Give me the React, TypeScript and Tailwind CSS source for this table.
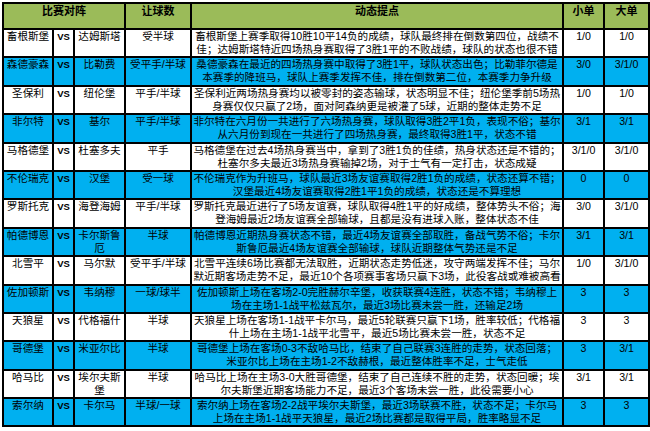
type Row = {
  home: string;
  away: string;
  hcp: string;
  desc: [string, string];
  small: string;
  big: string;
};

const rows: Row[] = [
  {
    home: "畜根斯堡",
    away: "达姆斯塔",
    hcp: "受半球",
    desc: [
      "畜根斯堡上赛季取得10胜10平14负的成绩，球队最终排在倒数第四位，战绩不",
      "佳；达姆斯塔特近四场热身赛取得了3胜1平的不败战绩，球队的状态也很不错",
    ],
    small: "1/0",
    big: "1/0",
  },
  {
    home: "森德豪森",
    away: "比勒费",
    hcp: "受平手/半球",
    desc: [
      "桑德豪森在最近的四场热身赛中取得了3胜1平，球队状态出色；比勒菲尔德是",
      "本赛季的降班马，球队上赛季发挥不佳，排在倒数第二位，本赛季力争升级",
    ],
    small: "3/0",
    big: "3/1/0",
  },
  {
    home: "圣保利",
    away: "纽伦堡",
    hcp: "平手/半球",
    desc: [
      "圣保利近两场热身赛均以被零封的姿态输球，状态明显不佳；纽伦堡季前5场热",
      "身赛仅仅只赢了2场，面对阿森纳更是被灌了5球，近期的整体走势不足",
    ],
    small: "1/0",
    big: "1/0",
  },
  {
    home: "非尔特",
    away: "基尔",
    hcp: "平手/半球",
    desc: [
      "非尔特在六月份一共进行了六场热身赛，球队取得3胜2平1负，表现不俗；基尔",
      "从六月份到现在一共进行了四场热身赛，最终取得3胜1平，状态不错",
    ],
    small: "3/1",
    big: "3/1",
  },
  {
    home: "马格德堡",
    away: "杜塞多夫",
    hcp: "平手",
    desc: [
      "马格德堡在过去4场热身赛当中，拿到了3胜1负的佳绩，热身状态还是不错的；",
      "杜塞尔多夫最近3场热身赛输掉2场，对于士气有一定打击，状态成疑",
    ],
    small: "3/1/0",
    big: "3/1/0",
  },
  {
    home: "不伦瑞克",
    away: "汉堡",
    hcp: "受一球",
    desc: [
      "不伦瑞克作为升班马，球队最近3场友谊赛取得2胜1负的成绩，状态还算不错；",
      "汉堡最近4场友谊赛取得2胜1平1负的成绩，状态还是不算理想",
    ],
    small: "0",
    big: "0",
  },
  {
    home: "罗斯托克",
    away: "海登海姆",
    hcp: "平手/半球",
    desc: [
      "罗斯托克最近进行了5场友谊赛，球队取得4胜1平的好成绩，整体势头不俗；海",
      "登海姆最近2场友谊赛全部输球，且都是没有进球入账，整体状态不佳",
    ],
    small: "3/0",
    big: "3/1/0",
  },
  {
    home: "帕德博恩",
    away: "卡尔斯鲁厄",
    hcp: "半球",
    desc: [
      "帕德博恩近期热身赛状态不错，最近4场友谊赛全部取胜，备战气势不俗；卡尔",
      "斯鲁厄最近4场友谊赛全部输球，球队近期整体气势还是不足",
    ],
    small: "3/1",
    big: "3/1",
  },
  {
    home: "北雪平",
    away: "马尔默",
    hcp: "受平手/半球",
    desc: [
      "北雪平连续6场比赛都无法取胜，近期状态走势低迷，攻守两端发挥不佳；马尔",
      "默近期客场走势不足，最近10个各项赛事客场只赢下3场，此役客战或难被高看",
    ],
    small: "1/0",
    big: "3/1/0",
  },
  {
    home: "佐加顿斯",
    away: "韦纳穆",
    hcp: "一球/球半",
    desc: [
      "佐加顿斯上场在客场2-0完胜赫尔辛堡，收获联赛4连胜，状态不错；韦纳穆上",
      "场在主场1-1战平松兹瓦尔，最近3场比赛未尝一胜，还输足2场",
    ],
    small: "3",
    big: "3",
  },
  {
    home: "天狼星",
    away: "代格福什",
    hcp: "半球",
    desc: [
      "天狼星上场在客场1-1战平卡尔马，最近5轮联赛只赢下1场，胜率较低；代格福",
      "什上场在主场1-1战平北雪平，最近5场比赛未尝一胜，状态不足",
    ],
    small: "3",
    big: "3",
  },
  {
    home: "哥德堡",
    away: "米亚尔比",
    hcp: "半球",
    desc: [
      "哥德堡上场在客场0-3不敌哈马比，结束了自己联赛3连胜的走势，状态回落；",
      "米亚尔比上场在主场1-2不敌赫根，最近整体胜率不足，士气走低",
    ],
    small: "3",
    big: "3/1",
  },
  {
    home: "哈马比",
    away: "埃尔夫斯堡",
    hcp: "半球",
    desc: [
      "哈马比上场在主场3-0大胜哥德堡，结束了自己连续不胜的走势，状态回暖；埃",
      "尔夫斯堡近期客场能力不足，最近3个客场未尝一胜，此役需要小心",
    ],
    small: "3/1",
    big: "3/1",
  },
  {
    home: "索尔纳",
    away: "卡尔马",
    hcp: "半球/一球",
    desc: [
      "索尔纳上场在客场2-2战平埃尔夫斯堡，最近3场联赛不胜，状态不足；卡尔马",
      "上场在主场1-1战平天狼星，最近2场比赛都是取得平局，胜率略显不足",
    ],
    small: "3",
    big: "3",
  },
];

const cell = "border-2 border-black p-0 align-top text-center leading-[13px]";

export default function App() {
  return (
    <div className="h-[431px] w-[650px] overflow-hidden bg-white pl-[2px] pt-[2px] font-['Liberation_Sans','Noto_Sans_CJK_SC',sans-serif] text-[10.6px] text-black">
      <table className="w-[646px] table-fixed border-collapse">
        <colgroup>
          <col className="w-[50px]" />
          <col className="w-[21px]" />
          <col className="w-[51px]" />
          <col className="w-[66px]" />
          <col className="w-[372px]" />
          <col className="w-[41px]" />
          <col className="w-[45px]" />
        </colgroup>
        <thead>
          <tr className="h-[26px] bg-[#9bbb59] text-[11px] font-bold">
            <th colSpan={3} className={cell + " pt-[1px]"}>比赛对阵</th>
            <th className={cell + " pt-[1px]"}>让球数</th>
            <th className={cell + " pt-[1px]"}>动态提点</th>
            <th className={cell + " pt-[1px]"}>小单</th>
            <th className={cell + " pt-[1px]"}>大单</th>
          </tr>
        </thead>
        <tbody>
          {rows.map((r, i) => (
            <tr key={i} className={i % 2 === 1 ? "h-[28.4px] bg-[#00b0f0]" : "h-[28.4px] bg-white"}>
              <td className={cell}>{r.home}</td>
              <td className={cell + " text-[9.5px] font-bold"}>VS</td>
              <td className={cell}>{r.away}</td>
              <td className={cell}>{r.hcp}</td>
              <td className={cell + " overflow-hidden whitespace-nowrap"}>
                <div>{r.desc[0]}</div>
                <div>{r.desc[1]}</div>
              </td>
              <td className={cell}>{r.small}</td>
              <td className={cell}>{r.big}</td>
            </tr>
          ))}
        </tbody>
      </table>
    </div>
  );
}
